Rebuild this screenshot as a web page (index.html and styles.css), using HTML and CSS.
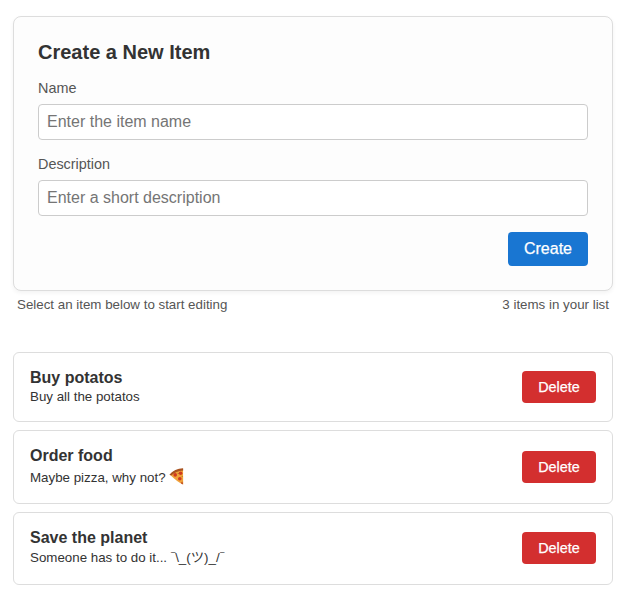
FILE: index.html
```html
<!DOCTYPE html>
<html lang="en">
<head>
<meta charset="utf-8">
<title>Items</title>
<link rel="stylesheet" href="styles.css">
</head>
<body>
<main class="page">
  <form class="card">
    <h2 class="card-title">Create a New Item</h2>
    <label class="label" for="name">Name</label>
    <input class="input" id="name" type="text" placeholder="Enter the item name">
    <label class="label" for="description">Description</label>
    <input class="input" id="description" type="text" placeholder="Enter a short description">
    <div class="actions"><button class="button create" type="button">Create</button></div>
  </form>
  <div class="meta"><span>Select an item below to start editing</span><span>3 items in your list</span></div>
  <ul class="list">
    <li class="item">
      <div class="item-body"><h3 class="item-title">Buy potatos</h3><p class="item-text">Buy all the potatos</p></div>
      <button class="button delete" type="button">Delete</button>
    </li>
    <li class="item item-emoji">
      <div class="item-body"><h3 class="item-title">Order food</h3>
        <p class="item-text">Maybe pizza, why not?
          <svg class="pizza" viewBox="0 0 15 17" aria-hidden="true">
            <path d="M.8 6.4 Q6 1.4 14 .7 L14.2 16.4 Q9 14.6 .8 6.4Z" fill="#f0a33a"/>
            <path d="M.4 6.7 Q5.5 .6 14.1 .3 L14.2 2.4 Q7 2.8 2.2 7.6Z" fill="#a85220"/>
            <circle cx="6.2" cy="6.9" r="1.8" fill="#cf3a20"/>
            <circle cx="11.6" cy="5.3" r="1.8" fill="#cf3a20"/>
            <circle cx="10.8" cy="10.8" r="1.8" fill="#cf3a20"/>
            <path d="M13.2 13.6l.9 2.8-2.2-1.2z" fill="#b53b1c"/>
            <path d="M8.9 5.2l.7.7M13 8.2l.5.7" stroke="#70511c" stroke-width=".7"/>
          </svg>
        </p>
      </div>
      <button class="button delete" type="button">Delete</button>
    </li>
    <li class="item item-kaomoji">
      <div class="item-body"><h3 class="item-title">Save the planet</h3><p class="item-text">Someone has to do it... <span class="macron">¯</span>\_(ツ)_/<span class="macron">¯</span></p></div>
      <button class="button delete" type="button">Delete</button>
    </li>
  </ul>
</main>
</body>
</html>
```
FILE: styles.css
```css
* { box-sizing: border-box; }
body {
  margin: 0;
  background: #fff;
  color: #333;
  font-family: "Liberation Sans", "Noto Sans CJK JP", sans-serif;
}
.page { width: 600px; margin: 16px 0 0 13px; }
.card {
  height: 275px;
  padding: 24px;
  border: 1px solid #ddd;
  border-radius: 8px;
  background: #fdfdfd;
  box-shadow: 0 2px 4px rgba(0, 0, 0, .05);
}
.card-title { margin: 0 0 16px; font-size: 20px; line-height: 23px; }
.label {
  display: block;
  height: 16px;
  margin-bottom: 8px;
  color: #555;
  font-size: 14.4px;
  line-height: 16px;
}
.input {
  display: block;
  width: 100%;
  height: 36px;
  margin: 0 0 16px;
  padding: 8px;
  border: 1px solid #ccc;
  border-radius: 4px;
  background: #fff;
  font: 16px "Liberation Sans", sans-serif;
}
.input::placeholder { color: #757575; }
.actions { display: flex; justify-content: flex-end; }
.button {
  padding: 0;
  border: 0;
  border-radius: 4px;
  color: #fff;
  font-family: inherit;
  flex: none;
  -webkit-text-stroke: .25px #fff;
}
.create { width: 80px; height: 34px; background: #1976d2; font-size: 16px; }
.delete { width: 74px; height: 32px; background: #d32f2f; font-size: 14.4px; }
.meta {
  display: flex;
  justify-content: space-between;
  margin-top: 6px;
  padding: 0 4px;
  color: #555;
  font-size: 13.33px;
  line-height: 15px;
}
.list {
  display: flex;
  flex-direction: column;
  gap: 8px;
  margin: 40px 0 0;
  padding: 0;
  list-style: none;
}
.item {
  display: flex;
  align-items: center;
  justify-content: space-between;
  height: 70px;
  padding: 0 16px;
  border: 1px solid #ddd;
  border-radius: 6px;
  background: #fff;
}
.item-emoji { height: 74px; }
.item-kaomoji { height: 73px; padding-bottom: 1px; }
.item-body { align-self: flex-start; padding-top: 16px; }
.item-title { margin: 0; font-size: 16px; line-height: 18px; }
.item-text {
  margin: 2px 0 0;
  font-size: 13.33px;
  line-height: 16px;
  white-space: nowrap;
}
.item-emoji .item-text { display: flex; align-items: center; margin-top: 3px; line-height: 20px; }
.item-kaomoji .item-text { margin-top: 3px; }
.pizza { width: 15px; height: 17px; margin: -3px 0 0 3px; }
.macron {
  display: inline-block;
  width: 4.4px;
  transform: scaleX(.6);
  transform-origin: left;
}
```
